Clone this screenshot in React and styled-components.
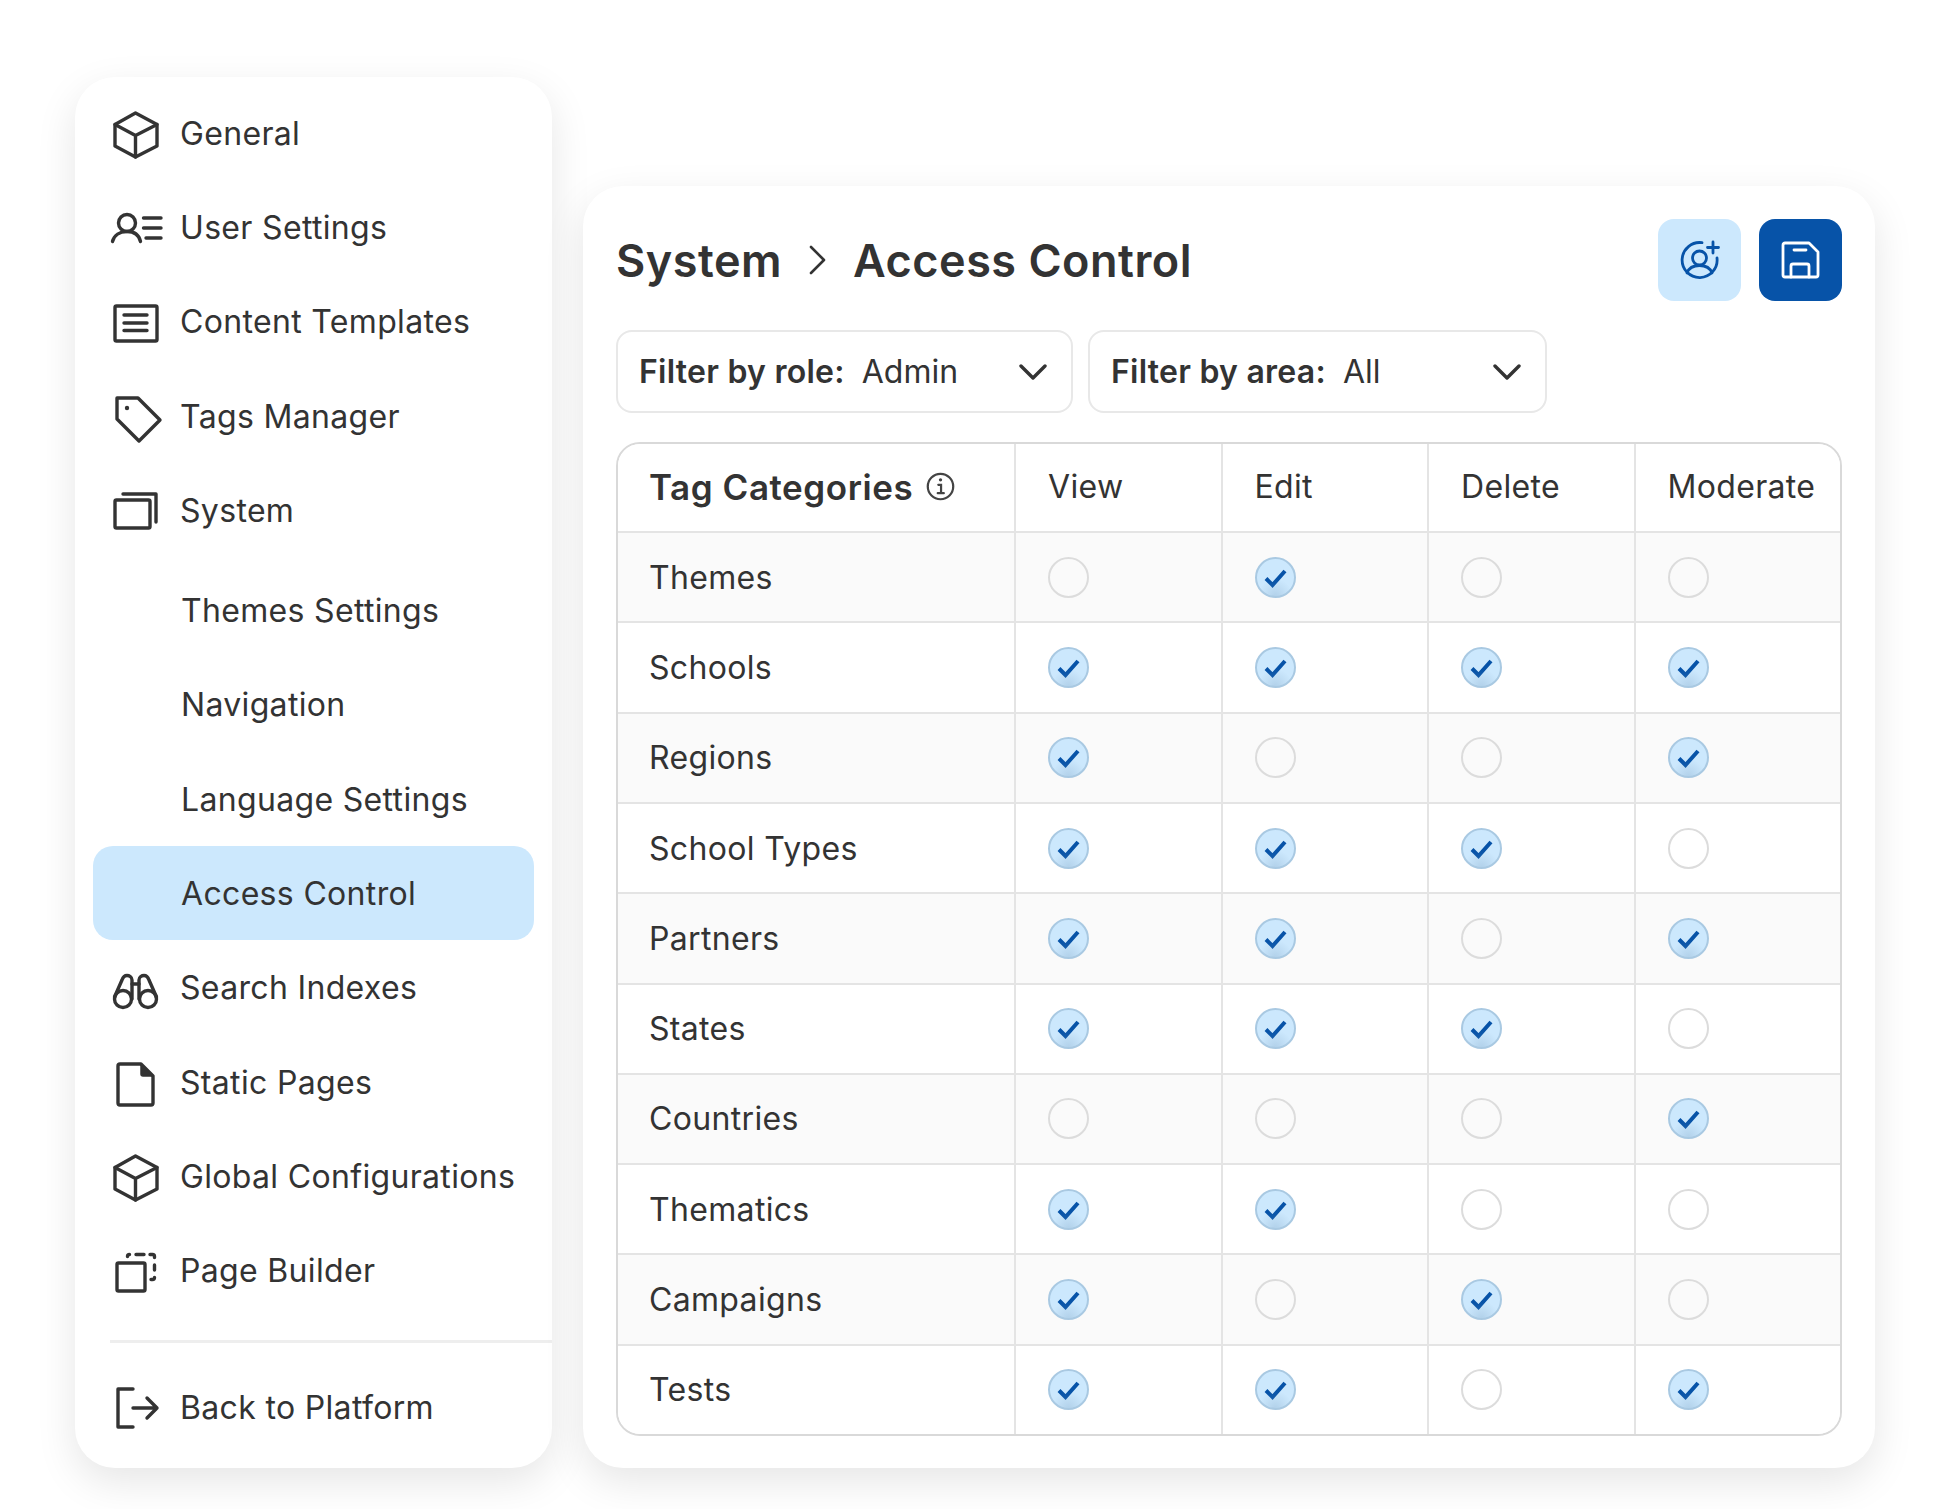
import React from 'react';
import styled, {createGlobalStyle} from 'styled-components';

const Global = createGlobalStyle`
  html, body { margin: 0; padding: 0; background: #fff; }
  body { font-family: Inter, "Liberation Sans", sans-serif; color: #333; }
`;

const Page = styled.div`
  width: 1950px;
  height: 1509px;
  box-sizing: border-box;
  padding: 77px 0 0 75px;
  display: flex;
  align-items: flex-start;
  gap: 31px;
  overflow: hidden;
`;

const Sidebar = styled.nav`
  width: 477px;
  height: 1391px;
  box-sizing: border-box;
  padding: 9px 18px 0;
  background: #fff;
  border-radius: 40px;
  box-shadow: 0 14px 40px rgba(0, 0, 0, .1);
`;

const NavRow = styled.div`
  height: ${p => p.$active ? 93.3 : 94.3}px;
  margin-top: ${p => p.$offset || 0}px;
  margin-bottom: ${p => p.$active ? 1 : 0}px;
  padding-left: 17px;
  display: flex;
  align-items: center;
  gap: 20px;
  font-size: 32px;
  letter-spacing: .33px;
  border-radius: 20px;
  background: ${p => p.$active ? '#cce8fd' : 'transparent'};
`;

const NavIcon = styled.svg`
  width: 50px;
  height: 50px;
  flex: none;
  overflow: visible;
  fill: none;
  stroke: #333;
  stroke-width: 3.4;
  stroke-linecap: round;
  stroke-linejoin: round;
`;

const SubLabel = styled.span`
  margin-left: 71px;
`;

const Divider = styled.div`
  height: 3px;
  margin: 22px -18px 17px 17px;
  background: #eee;
`;

const Main = styled.main`
  width: 1292px;
  height: 1282px;
  margin-top: 109px;
  box-sizing: border-box;
  padding: 33px;
  background: #fff;
  border-radius: 40px;
  box-shadow: 0 14px 40px rgba(0, 0, 0, .1);
`;

const Header = styled.header`
  height: 82px;
  display: flex;
  align-items: center;
  justify-content: space-between;
`;

const Breadcrumb = styled.h1`
  margin: 0;
  display: flex;
  align-items: center;
  gap: 27px;
  font-size: 45px;
  font-weight: 600;
  letter-spacing: .5px;
  color: #333;
`;

const Actions = styled.div`
  display: flex;
  gap: 18px;
`;

const ActionButton = styled.button`
  width: 83px;
  height: 82px;
  padding: 0;
  border: 0;
  border-radius: 16px;
  display: flex;
  align-items: center;
  justify-content: center;
  background: ${p => p.$primary ? '#0753a8' : '#cce8fd'};
  svg {
    width: 40px;
    height: 40px;
    fill: none;
    stroke: ${p => p.$primary ? '#fff' : '#0753a8'};
    stroke-width: 2.8;
    stroke-linecap: round;
    stroke-linejoin: round;
  }
`;

const Filters = styled.div`
  margin-top: 29px;
  display: flex;
  gap: 15px;
`;

const Filter = styled.div`
  width: ${p => p.$width}px;
  height: 83px;
  box-sizing: border-box;
  padding: 0 24px 0 21px;
  border: 2px solid #e8e8e8;
  border-radius: 16px;
  display: flex;
  align-items: center;
  font-size: 32px;
  line-height: 1;
  b { font-weight: 600; margin-right: 17px; letter-spacing: .25px; }
  svg { margin-left: auto; flex: none; }
`;

const Table = styled.div`
  width: 1226px;
  height: 994px;
  margin-top: 29px;
  box-sizing: border-box;
  border: 2px solid #d9d9d9;
  border-radius: 24px;
  overflow: hidden;
  display: grid;
  grid-template-rows: 87px repeat(10, 1fr);
`;

const TableRow = styled.div`
  display: grid;
  grid-template-columns: 396px 206.5px 206.5px 206.5px 1fr;
  background: ${p => p.$striped ? '#fafafa' : '#fff'};
  & + & { border-top: 2px solid #e4e4e4; }
`;

const Cell = styled.div`
  box-sizing: border-box;
  padding-left: 31px;
  padding-bottom: ${p => p.$head ? 2 : 0}px;
  display: flex;
  align-items: center;
  font-size: 32px;
  letter-spacing: .33px;
  border-left: ${p => p.$first ? 0 : '2px solid #e4e4e4'};
`;

const FlagCell = styled(Cell)`
  padding-left: 32px;
`;

const HeaderTitle = styled.span`
  font-weight: 600;
  font-size: 35px;
  letter-spacing: .55px;
  margin-right: 12px;
`;

const Radio = styled.span`
  position: relative;
  width: 41px;
  height: 41px;
  box-sizing: border-box;
  border-radius: 50%;
  overflow: hidden;
  border: 2px solid ${p => p.$on ? '#a9c9e2' : '#dcdcdc'};
  background: ${p => p.$on ? '#cce8fd' : 'transparent'};
  svg {
    position: absolute;
    left: -2px;
    top: -2px;
    width: 41px;
    height: 41px;
    fill: none;
    stroke: #0753a8;
    stroke-width: 4;
  }
  ${p => p.$on && `
    &::after {
      content: '';
      position: absolute;
      left: 0;
      right: 0;
      bottom: 0;
      height: 16px;
      background: radial-gradient(circle at 50% 100%, rgba(110, 150, 185, .28), transparent 70%);
    }
  `}
`;

const Cube = () => (
  <NavIcon viewBox="0 0 50 50">
    <path d="M25.5 5 47 16.5V38L25.5 49 5 38V16.5Z"/>
    <path d="M5 16.5 25.5 27.5 47 16.5M25.5 27.5V49"/>
  </NavIcon>
);

const icons = {
  cube: <Cube/>,
  user: (
    <NavIcon viewBox="0 0 50 50">
      <circle cx="17" cy="21" r="8.5"/>
      <path d="M2.5 39.5C4 33 10 29.5 17 29.5S29 33 30.5 39.5"/>
      <path d="M33.5 16H51M33.5 26H51M36 36H51"/>
    </NavIcon>
  ),
  list: (
    <NavIcon viewBox="0 0 50 50">
      <rect x="5" y="9" width="42" height="35" rx="1.5"/>
      <path d="M14 18H37M14 26H37M14 33.5H37"/>
    </NavIcon>
  ),
  tag: (
    <NavIcon viewBox="0 0 50 50">
      <path d="M7 7H28L50 29 29 50 7 28Z"/>
      <circle cx="17" cy="17" r="2.2" fill="#333" stroke="none"/>
    </NavIcon>
  ),
  windows: (
    <NavIcon viewBox="0 0 50 50">
      <rect x="5" y="15" width="35" height="28" rx="1.5"/>
      <path d="M13 9H46V37"/>
    </NavIcon>
  ),
  binoculars: (
    <NavIcon viewBox="0 0 50 50">
      <circle cx="13" cy="36" r="8.5"/>
      <circle cx="38" cy="36" r="8.5"/>
      <path d="M4.5 34 12 17C13 14 15 12.5 17 12.5S22 14 22 17V36"/>
      <path d="M46.5 34 39 17C38 14 36 12.5 34 12.5S29 14 29 17V36"/>
      <path d="M22 21H29"/>
    </NavIcon>
  ),
  page: (
    <NavIcon viewBox="0 0 50 50">
      <path d="M10 7H31L43 19V46a2 2 0 0 1-2 2H10a2 2 0 0 1-2-2V9a2 2 0 0 1 2-2Z"/>
      <path d="M31 7V17a2 2 0 0 0 2 2H43Z" fill="#333" strokeWidth="1.5"/>
    </NavIcon>
  ),
  builder: (
    <NavIcon viewBox="0 0 50 50">
      <rect x="7" y="17" width="28" height="28" rx="1.5"/>
      <path d="M17.5 10.5a2 2 0 0 1 2-2M26 8.5H34M40 8.5h2.5a2 2 0 0 1 2 2v1M44.5 19V24M44.5 31.5a2 2 0 0 1-2 2H41"/>
    </NavIcon>
  ),
  exit: (
    <NavIcon viewBox="0 0 50 50">
      <path d="M23 7H8V45H23"/>
      <path d="M23 26H47M37 16 47 26 37 36"/>
    </NavIcon>
  )
};

const navTop = [
  ['cube', 'General'],
  ['user', 'User Settings'],
  ['list', 'Content Templates'],
  ['tag', 'Tags Manager'],
  ['windows', 'System']
];
const navSub = ['Themes Settings', 'Navigation', 'Language Settings', 'Access Control'];
const navBottom = [
  ['binoculars', 'Search Indexes'],
  ['page', 'Static Pages'],
  ['cube', 'Global Configurations'],
  ['builder', 'Page Builder']
];

const rows = [
  ['Themes', 0, 1, 0, 0],
  ['Schools', 1, 1, 1, 1],
  ['Regions', 1, 0, 0, 1],
  ['School Types', 1, 1, 1, 0],
  ['Partners', 1, 1, 0, 1],
  ['States', 1, 1, 1, 0],
  ['Countries', 0, 0, 0, 1],
  ['Thematics', 1, 1, 0, 0],
  ['Campaigns', 1, 0, 1, 0],
  ['Tests', 1, 1, 0, 1]
];

const Chevron = () => (
  <svg width="28" height="18" viewBox="0 0 28 18" fill="none" stroke="#333" strokeWidth="3.4" strokeLinecap="round" strokeLinejoin="round">
    <path d="M2 3 14 15 26 3"/>
  </svg>
);

const Check = ({on}) => (
  <Radio $on={on}>
    {on ? <svg viewBox="0 0 41 41"><path d="M11 21.5 17.5 28 30 14"/></svg> : null}
  </Radio>
);

export default function App() {
  return (
    <Page>
      <Global/>
      <Sidebar>
        {navTop.map(([icon, label]) => (
          <NavRow key={label}>{icons[icon]}<span>{label}</span></NavRow>
        ))}
        {navSub.map((label, i) => (
          <NavRow key={label} $offset={i === 0 ? 6 : 0} $active={label === 'Access Control'}>
            <SubLabel>{label}</SubLabel>
          </NavRow>
        ))}
        {navBottom.map(([icon, label]) => (
          <NavRow key={label}>{icons[icon]}<span>{label}</span></NavRow>
        ))}
        <Divider/>
        <NavRow>{icons.exit}<span>Back to Platform</span></NavRow>
      </Sidebar>
      <Main>
        <Header>
          <Breadcrumb>
            <span>System</span>
            <svg width="17" height="30" viewBox="0 0 17 30" fill="none" stroke="#333" strokeWidth="2.6" strokeLinecap="round" strokeLinejoin="round">
              <path d="M2 2 15 15 2 28"/>
            </svg>
            <span>Access Control</span>
          </Breadcrumb>
          <Actions>
            <ActionButton>
              <svg viewBox="0 0 40 40">
                <path d="M37 18A17.5 17.5 0 1 1 22 2.7"/>
                <circle cx="19.5" cy="18" r="7"/>
                <path d="M7 33C9 27.5 14 25.5 19.5 25.5S30 27.5 32 33"/>
                <path d="M33 2V13M27.5 7.5H38.5"/>
              </svg>
            </ActionButton>
            <ActionButton $primary>
              <svg viewBox="0 0 40 40">
                <path d="M4 3H28L37 12V35a2 2 0 0 1-2 2H4a2 2 0 0 1-2-2V5a2 2 0 0 1 2-2Z"/>
                <path d="M10 37V26a2 2 0 0 1 2-2H26a2 2 0 0 1 2 2V37"/>
                <path d="M13 10H25"/>
              </svg>
            </ActionButton>
          </Actions>
        </Header>
        <Filters>
          <Filter $width={457}><b>Filter by role:</b>Admin<Chevron/></Filter>
          <Filter $width={459}><b>Filter by area:</b>All<Chevron/></Filter>
        </Filters>
        <Table>
          <TableRow>
            <Cell $first $head>
              <HeaderTitle>Tag Categories</HeaderTitle>
              <svg width="31" height="31" viewBox="0 0 28 28" fill="none" stroke="#444" strokeWidth="2" strokeLinecap="round">
                <circle cx="14" cy="14" r="11.5"/>
                <path d="M12 12.5H14.5V20M11.5 20H17"/>
                <circle cx="14" cy="8" r="1.5" fill="#444" stroke="none"/>
              </svg>
            </Cell>
            <FlagCell $head>View</FlagCell>
            <FlagCell $head>Edit</FlagCell>
            <FlagCell $head>Delete</FlagCell>
            <FlagCell $head>Moderate</FlagCell>
          </TableRow>
          {rows.map(([name, ...flags], i) => (
            <TableRow key={name} $striped={i % 2 === 0}>
              <Cell $first>{name}</Cell>
              {flags.map((on, j) => (
                <FlagCell key={j}><Check on={!!on}/></FlagCell>
              ))}
            </TableRow>
          ))}
        </Table>
      </Main>
    </Page>
  );
}
